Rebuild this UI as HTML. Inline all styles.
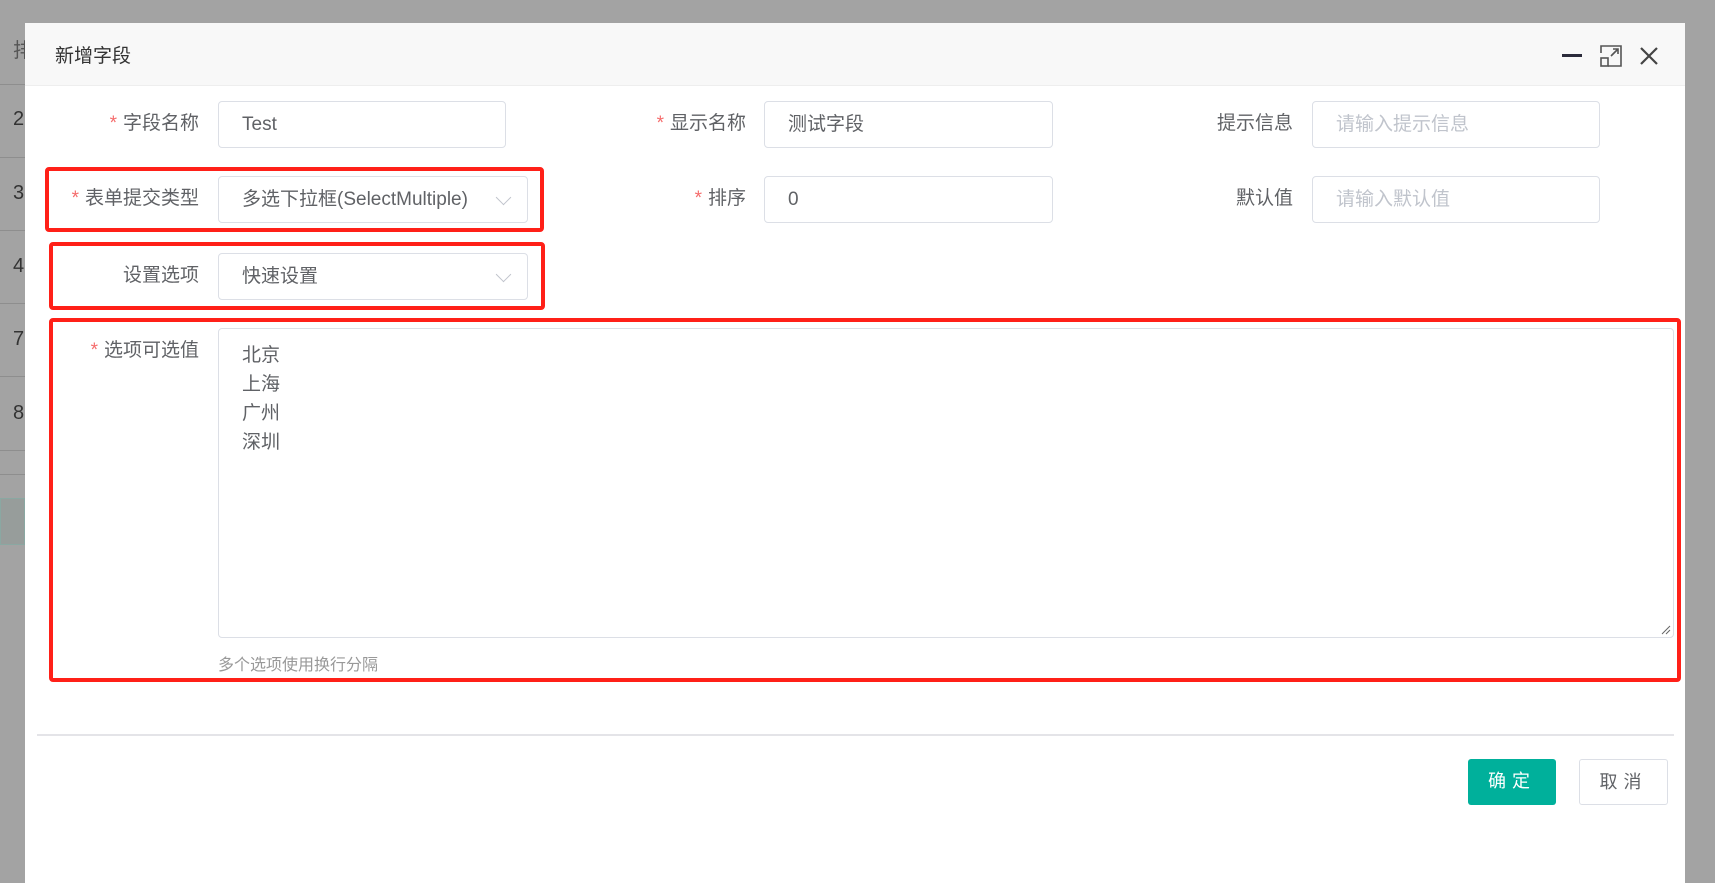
<!DOCTYPE html>
<html><head><meta charset="utf-8"><style>
*{box-sizing:border-box;margin:0;padding:0}
body{width:1715px;height:864px;overflow:hidden;background:#a3a3a3;font-family:"Liberation Sans","Noto Sans CJK SC",sans-serif;position:relative;color:#606266}
.abs{position:absolute}
.bgnum{position:absolute;left:13px;font-size:20px;color:#333}
.bgline{position:absolute;left:0;width:25px;height:1px;background:#8e8e8e}
.dlg{position:absolute;left:25px;top:23px;width:1660px;height:860px;background:#fff}
.hdr{position:absolute;left:0;top:0;width:1660px;height:63px;background:#f8f8f8;border-bottom:1px solid #eee}
.title{position:absolute;left:30px;top:18px;font-size:19px;color:#333}
.lbl{position:absolute;font-size:19px;color:#606266;text-align:right;width:174px;line-height:46px}
.lbl i{color:#f56c6c;font-style:normal;margin-right:6px}
.inp{position:absolute;border:1px solid #dcdfe6;border-radius:4px;height:47px;font-size:19px;line-height:45px;padding-left:23px;color:#606266;background:#fff}
.ph{color:#c0c4cc}
.arrow{position:absolute;right:18px;top:15px;width:11px;height:11px;border-right:1.5px solid #c0c4cc;border-bottom:1.5px solid #c0c4cc;transform:rotate(45deg)}
.red{position:absolute;border:4px solid #ff2018;border-radius:4px}
.btn{position:absolute;height:46px;border-radius:3px;font-size:18px;text-align:center;line-height:44px;letter-spacing:6px}
</style></head><body>
<div class="bgnum" style="top:34px;color:#555">排</div>
<div class="bgline" style="top:84px"></div>
<div class="bgnum" style="top:108px">2</div>
<div class="bgline" style="top:157px"></div>
<div class="bgnum" style="top:182px">3</div>
<div class="bgline" style="top:230px"></div>
<div class="bgnum" style="top:255px">4</div>
<div class="bgline" style="top:303px"></div>
<div class="bgnum" style="top:328px">7</div>
<div class="bgline" style="top:376px"></div>
<div class="bgnum" style="top:402px">8</div>
<div class="bgline" style="top:450px"></div>
<div class="bgline" style="top:474px"></div>
<div class="abs" style="left:0;top:498px;width:25px;height:47px;background:#979d9b;border:1px solid #8aa8a2"></div>

<div class="dlg">
 <div class="hdr">
  <div class="title">新增字段</div>
  <div class="abs" style="left:1537px;top:31px;width:20px;height:2.5px;background:#2b2b3b"></div>
  <svg class="abs" style="left:1575px;top:22px" width="22" height="22" viewBox="0 0 22 22" fill="none" stroke="#555" stroke-width="1.6"><path d="M1 8V1h20v20H8"/><rect x="1" y="13" width="7" height="8"/><path d="M11 11l7-7M13 4h5v5"/></svg>
  <svg class="abs" style="left:1614px;top:23px" width="20" height="20" viewBox="0 0 20 20" stroke="#444" stroke-width="2.2"><path d="M2 2l16 16M18 2L2 18"/></svg>
 </div>

 <div class="lbl" style="left:0;top:78px"><i>*</i>字段名称</div>
 <div class="inp" style="left:193px;top:78px;width:288px">Test</div>
 <div class="lbl" style="left:547px;top:78px"><i>*</i>显示名称</div>
 <div class="inp" style="left:739px;top:78px;width:289px">测试字段</div>
 <div class="lbl" style="left:1094px;top:78px">提示信息</div>
 <div class="inp ph" style="left:1287px;top:78px;width:288px">请输入提示信息</div>

 <div class="lbl" style="left:0;top:153px"><i>*</i>表单提交类型</div>
 <div class="inp" style="left:193px;top:153px;width:310px">多选下拉框(SelectMultiple)<span class="arrow"></span></div>
 <div class="lbl" style="left:547px;top:153px"><i>*</i>排序</div>
 <div class="inp" style="left:739px;top:153px;width:289px">0</div>
 <div class="lbl" style="left:1094px;top:153px">默认值</div>
 <div class="inp ph" style="left:1287px;top:153px;width:288px">请输入默认值</div>

 <div class="lbl" style="left:0;top:230px">设置选项</div>
 <div class="inp" style="left:193px;top:230px;width:310px">快速设置<span class="arrow"></span></div>

 <div class="lbl" style="left:0;top:305px;line-height:46px"><i>*</i>选项可选值</div>
 <div class="inp" style="left:193px;top:305px;width:1456px;height:310px;line-height:29px;padding-top:12px">北京<br>上海<br>广州<br>深圳
  <svg class="abs" style="right:2px;bottom:2px" width="10" height="10" stroke="#666" stroke-width="1"><path d="M1 9L9 1M5 9L9 5"/></svg></div>
 <div class="abs" style="left:193px;top:628px;font-size:16px;color:#999">多个选项使用换行分隔</div>

 <div class="red" style="left:20px;top:144px;width:499px;height:65px"></div>
 <div class="red" style="left:24px;top:219px;width:496px;height:68px"></div>
 <div class="red" style="left:24px;top:295px;width:1632px;height:364px"></div>

 <div class="abs" style="left:12px;top:711px;width:1637px;height:2px;background:#e4e4e8"></div>
 <div class="btn" style="left:1443px;top:736px;width:88px;background:#00b09b;color:#fff">确定</div>
 <div class="btn" style="left:1554px;top:736px;width:89px;border:1px solid #dcdfe6;color:#606266;background:#fff">取消</div>
</div>
</body></html>
